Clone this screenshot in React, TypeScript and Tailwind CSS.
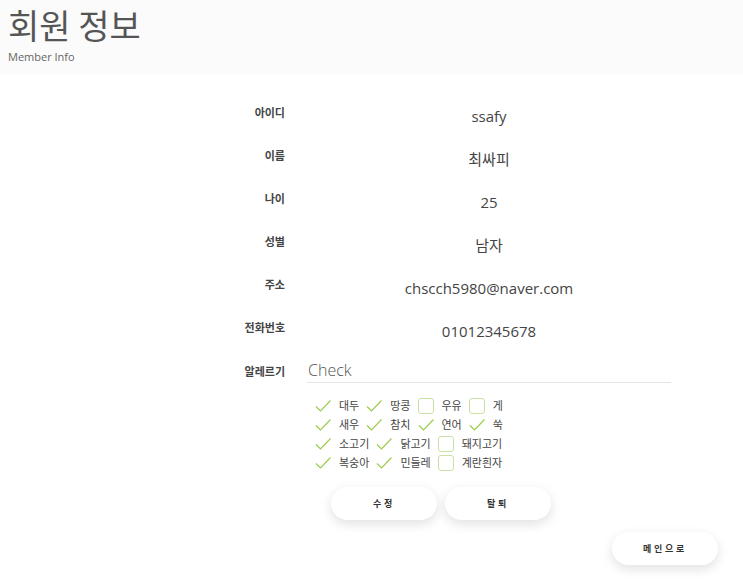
import React from "react";

const KR = { fontFamily: '"Noto Sans CJK KR", sans-serif' };
const LAT = { fontFamily: '"Open Sans", "Noto Sans CJK KR", sans-serif' };

const info = [
  { label: "아이디", value: "ssafy" },
  { label: "이름", value: "최싸피" },
  { label: "나이", value: "25" },
  { label: "성별", value: "남자" },
  { label: "주소", value: "chscch5980@naver.com" },
  { label: "전화번호", value: "01012345678" },
];

const allergyRows: [string, boolean][][] = [
  [["대두", true], ["땅콩", true], ["우유", false], ["게", false]],
  [["새우", true], ["참치", true], ["연어", true], ["쑥", true]],
  [["소고기", true], ["닭고기", true], ["돼지고기", false]],
  [["복숭아", true], ["민들레", true], ["계란흰자", false]],
];

const CheckMark = () => (
  <svg width="16" height="16" viewBox="0 0 16 16" className="shrink-0">
    <path d="M1 8.5 L5.5 13 L15.5 2.5" fill="none" stroke="#9ccc4a" strokeWidth="1.2" />
  </svg>
);

const EmptyBox = () => (
  <span className="block w-4 h-4 shrink-0 rounded-[3px] border-[1.5px] border-[#c8e2a4] bg-white" />
);

const PillButton = ({ children, className = "" }: { children: React.ReactNode; className?: string }) => (
  <button
    className={`w-[106px] h-[33px] rounded-full bg-white shadow-[0_4px_12px_rgba(0,0,0,0.12)] text-[9px] font-semibold tracking-[0.3em] text-[#333] ${className}`}
    style={KR}
  >
    {children}
  </button>
);

export default function App() {
  return (
    <div className="w-[743px] h-[579px] bg-white overflow-hidden">
      <header className="h-[75px] bg-[#fbfbfb] px-2">
        <h1 className="text-[34px] leading-[49px] text-[#555]" style={KR}>
          회원 정보
        </h1>
        <p className="text-[11px] leading-[15px] text-[#666]" style={LAT}>
          Member Info
        </p>
      </header>

      <main className="pt-[20px]">
        {info.map((row) => (
          <div key={row.label} className="flex items-center h-[43px]">
            <div className="w-[285px] pb-[8px] text-right text-[11px] font-bold text-[#444]" style={KR}>
              {row.label}
            </div>
            <div className="ml-[22px] w-[364px] text-center text-[15px] text-[#444]" style={LAT}>
              {row.value}
            </div>
          </div>
        ))}

        <div className="flex items-center mt-[6px] h-[24px]">
          <div className="w-[285px] text-right text-[11px] font-bold text-[#444]" style={KR}>
            알레르기
          </div>
          <div
            className="ml-[22px] w-[364px] h-[24px] border-b border-[#e3e3e3] text-[16px] leading-[22px] font-light text-[#555] pl-[1px]"
            style={LAT}
          >
            Check
          </div>
        </div>

        <div className="ml-[315px] mt-[13px] flex flex-col">
          {allergyRows.map((row, i) => (
            <div key={i} className="flex items-center h-[19px]">
              {row.map(([name, checked]) => (
                <div key={name} className="flex items-center mr-[7px]">
                  {checked ? <CheckMark /> : <EmptyBox />}
                  <span className="ml-[8px] text-[11px] text-[#444]" style={KR}>
                    {name}
                  </span>
                </div>
              ))}
            </div>
          ))}
        </div>

        <div className="flex gap-2 ml-[331px] mt-[15px]">
          <PillButton>수정</PillButton>
          <PillButton>탈퇴</PillButton>
        </div>

        <div className="flex justify-end pr-[25px] mt-[12px]">
          <PillButton>메인으로</PillButton>
        </div>
      </main>
    </div>
  );
}
